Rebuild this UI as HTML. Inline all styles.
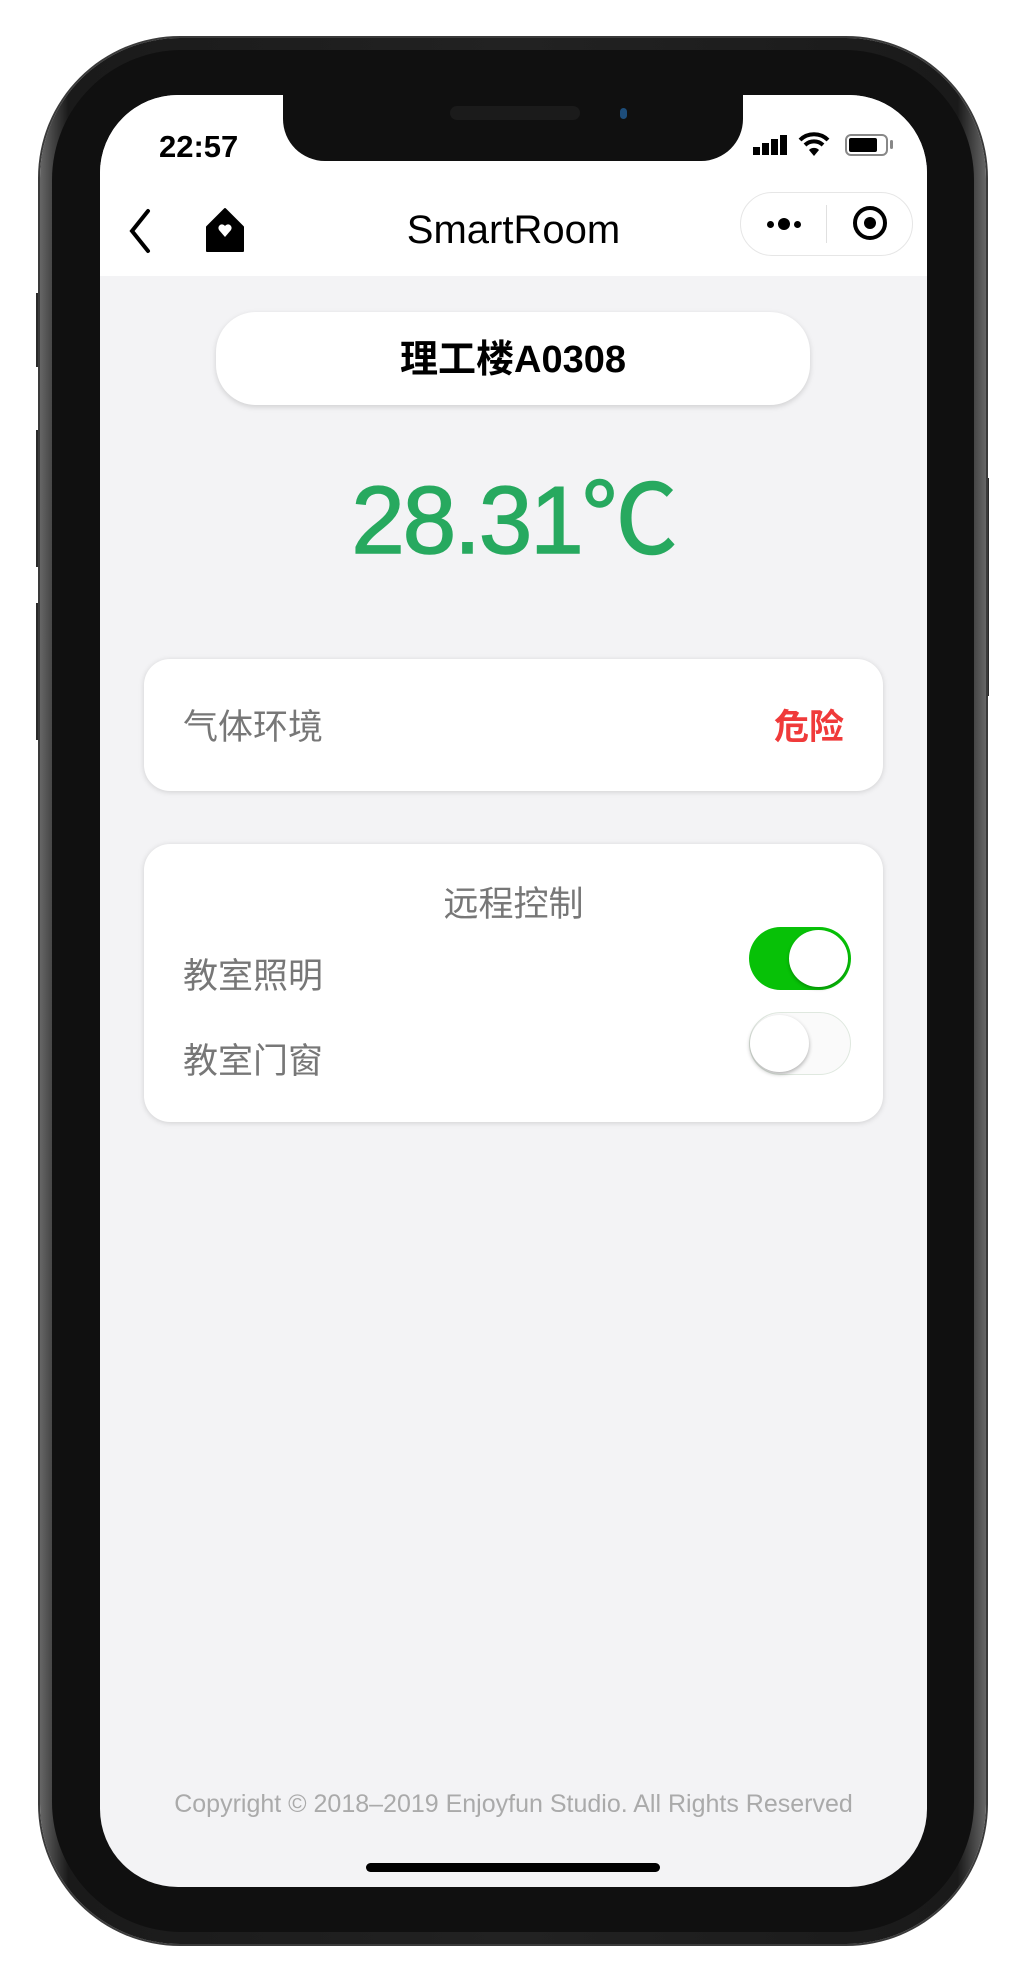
<!DOCTYPE html>
<html><head><meta charset="utf-8"><style>
*{margin:0;padding:0;box-sizing:border-box}
body{width:1025px;height:1981px;background:#fff;position:relative;overflow:hidden;font-family:"Liberation Sans","Noto Sans CJK SC",sans-serif}
.abs{position:absolute}
.outer{left:40px;top:38px;width:946px;height:1906px;border-radius:140px;background:linear-gradient(90deg,#666,#1a1a1a 3%,#222 50%,#1a1a1a 97%,#666);box-shadow:0 0 0 2px #3a3a3a}
.inner{left:52px;top:50px;width:922px;height:1882px;border-radius:130px;background:#101010}
.screen{left:100px;top:95px;width:827px;height:1792px;border-radius:78px;background:#f3f3f5;overflow:hidden}
.btn{background:#2a2a2a;width:6px}
</style></head><body>
<div class="abs btn" style="left:36px;top:293px;height:74px"></div>
<div class="abs btn" style="left:36px;top:430px;height:137px"></div>
<div class="abs btn" style="left:36px;top:603px;height:137px"></div>
<div class="abs btn" style="left:983px;top:478px;height:218px"></div>
<div class="abs outer"></div>
<div class="abs inner"></div>
<div class="abs screen">
  <div class="abs" style="left:0;top:0;width:827px;height:181px;background:#fff"></div>
  <div class="abs" style="left:59px;top:34px;font-size:31px;font-weight:bold;color:#000">22:57</div>
  <!-- signal -->
  <div class="abs" style="left:653px;top:52px;width:7px;height:8px;background:#000"></div>
  <div class="abs" style="left:662px;top:48px;width:7px;height:12px;background:#000"></div>
  <div class="abs" style="left:671px;top:44px;width:7px;height:16px;background:#000"></div>
  <div class="abs" style="left:680px;top:40px;width:7px;height:20px;background:#000"></div>
  <svg class="abs" style="left:698px;top:36px" width="32" height="26" viewBox="0 0 32 26"><path d="M2 9 A20 20 0 0 1 30 9" stroke="#000" stroke-width="4" fill="none"/><path d="M7 14 A13 13 0 0 1 25 14" stroke="#000" stroke-width="4" fill="none"/><path d="M16 25 L11 19 A7 7 0 0 1 21 19 Z" fill="#000"/></svg>
  <div class="abs" style="left:745px;top:39px;width:43px;height:22px;border:2px solid #888;border-radius:6px"><div style="margin:2px;width:28px;height:14px;background:#000;border-radius:2px"></div></div>
  <div class="abs" style="left:790px;top:45px;width:3px;height:9px;background:#888;border-radius:2px"></div>
  <!-- nav -->
  <svg class="abs" style="left:26px;top:112px" width="28" height="48" viewBox="0 0 28 48"><path d="M22 4 L6 24 L22 44" stroke="#000" stroke-width="4" fill="none" stroke-linecap="round"/></svg>
  <svg class="abs" style="left:104px;top:112px" width="42" height="46" viewBox="0 0 42 46"><path d="M21 2 L39 20 L39 44 L3 44 L3 20 Z" fill="#000" stroke="#000" stroke-width="2" stroke-linejoin="round"/><path d="M21 30 L15 23 A3.5 3.5 0 0 1 21 19 A3.5 3.5 0 0 1 27 23 Z" fill="#fff"/></svg>
  <div class="abs" style="left:0;width:827px;top:113px;text-align:center;font-size:40px;color:#000;letter-spacing:0px">SmartRoom</div>
  <div class="abs" style="left:640px;top:97px;width:173px;height:64px;border:1px solid #e6e6e6;border-radius:32px;background:#fff"></div>
  <div class="abs" style="left:667px;top:126px;width:7px;height:7px;border-radius:50%;background:#000"></div>
  <div class="abs" style="left:678px;top:123px;width:12px;height:12px;border-radius:50%;background:#000"></div>
  <div class="abs" style="left:694px;top:126px;width:7px;height:7px;border-radius:50%;background:#000"></div>
  <div class="abs" style="left:726px;top:110px;width:1px;height:38px;background:#e0e0e0"></div>
  <div class="abs" style="left:753px;top:111px;width:34px;height:34px;border-radius:50%;border:4px solid #000"><div style="margin:7px;width:12px;height:12px;border-radius:50%;background:#000"></div></div>
  <!-- notch -->
  <div class="abs" style="left:183px;top:-10px;width:460px;height:76px;background:#101010;border-radius:0 0 42px 42px"></div>
  <div class="abs" style="left:350px;top:11px;width:130px;height:14px;background:#1b1b1b;border-radius:7px"></div>
  <div class="abs" style="left:520px;top:13px;width:7px;height:11px;background:#1d4d7a;border-radius:4px"></div>
  <!-- content -->
  <div class="abs" style="left:116px;top:217px;width:594px;height:93px;background:#fff;border-radius:40px;box-shadow:0 2px 6px rgba(0,0,0,.15);text-align:center;line-height:97px;font-size:38px;font-weight:bold;color:#000">理工楼A0308</div>
  <div class="abs" style="left:0;width:827px;top:366px;text-align:center;font-size:96px;color:#27a95f;letter-spacing:-2px;line-height:120px;-webkit-text-stroke:1.5px #27a95f">28.31℃</div>
  <div class="abs" style="left:44px;top:564px;width:739px;height:132px;background:#fff;border-radius:26px;box-shadow:0 1px 6px rgba(0,0,0,.15)">
    <div class="abs" style="left:39px;top:40px;font-size:35px;color:#777">气体环境</div>
    <div class="abs" style="right:39px;top:40px;font-size:35px;color:#f03a3a;font-weight:bold">危险</div>
  </div>
  <div class="abs" style="left:44px;top:749px;width:739px;height:278px;background:#fff;border-radius:26px;box-shadow:0 1px 6px rgba(0,0,0,.15)">
    <div class="abs" style="left:0;width:739px;top:32px;text-align:center;font-size:35px;color:#777">远程控制</div>
    <div class="abs" style="left:39px;top:104px;font-size:35px;color:#777">教室照明</div>
    <div class="abs" style="left:39px;top:189px;font-size:35px;color:#777">教室门窗</div>
    <div class="abs" style="left:605px;top:83px;width:102px;height:63px;border-radius:32px;background:#07c107"></div>
    <div class="abs" style="left:645px;top:86px;width:59px;height:57px;border-radius:50%;background:#fff;box-shadow:0 2px 3px rgba(0,0,0,.25)"></div>
    <div class="abs" style="left:605px;top:168px;width:102px;height:63px;border-radius:32px;background:#fafafa;border:1px solid #dfe8df"></div>
    <div class="abs" style="left:606px;top:171px;width:59px;height:57px;border-radius:50%;background:#fff;box-shadow:0 2px 4px rgba(0,0,0,.3)"></div>
  </div>
  <div class="abs" style="left:0;width:827px;top:1695px;text-align:center;font-size:25px;color:#aaa">Copyright © 2018–2019 Enjoyfun Studio. All Rights Reserved</div>
  <div class="abs" style="left:266px;top:1768px;width:294px;height:9px;border-radius:5px;background:#000"></div>
</div>
</body></html>
